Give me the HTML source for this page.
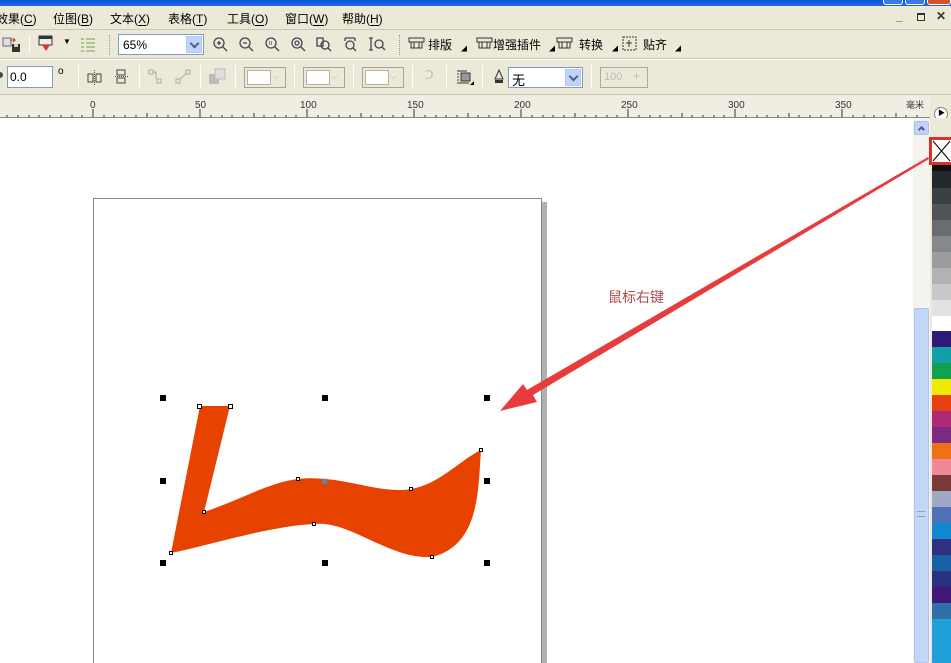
<!DOCTYPE html>
<html><head><meta charset="utf-8">
<style>
*{margin:0;padding:0;box-sizing:border-box}
body{width:951px;height:663px;overflow:hidden;background:#fff;font-family:"Liberation Sans","Noto Sans CJK SC",sans-serif;font-size:12px;color:#000;position:relative}
.a{position:absolute}
.bar{background:#ece9d8}
.t{position:absolute;white-space:nowrap}
.t u{text-decoration:none;border-bottom:1px solid #000;line-height:11px;display:inline-block}
.sep{position:absolute;width:1px;background:#c5c2b2;border-right:1px solid #fff}
.dd{position:absolute;background:#fff;border:1px solid #7f9db9;height:21px}
.ddb{position:absolute;right:1px;top:1px;width:16px;height:17px;background:#c1d3fb;border:1px solid #b4c8f6}
.ddb:after{content:"";position:absolute;left:4px;top:3px;width:5px;height:5px;border-right:2px solid #4d6185;border-bottom:2px solid #4d6185;transform:rotate(45deg)}
.gdd{position:absolute;height:21px;border:1px solid #a5a396;background:#ece9d8}
.gdd i{position:absolute;left:2px;top:2px;width:24px;height:15px;background:#fff;border:1px solid #b5b3a8}
</style></head><body>
<div class="a" style="left:0;top:0;width:951px;height:6px;background:linear-gradient(#0a55d8,#2466e0)"></div>
<div class="a" style="left:883px;top:0;width:20px;height:5px;background:#3b79e8;border:1px solid #fff;border-top:0;border-radius:0 0 3px 3px"></div>
<div class="a" style="left:905px;top:0;width:20px;height:5px;background:#3b79e8;border:1px solid #fff;border-top:0;border-radius:0 0 3px 3px"></div>
<div class="a" style="left:927px;top:0;width:24px;height:5px;background:#d8502c;border:1px solid #fff;border-top:0;border-radius:0 0 3px 3px"></div>
<div class="a bar" style="left:0;top:6px;width:951px;height:24px"></div>
<div class="t" style="left:-4px;top:10px">效果(<u>C</u>)</div>
<div class="t" style="left:53px;top:10px">位图(<u>B</u>)</div>
<div class="t" style="left:110px;top:10px">文本(<u>X</u>)</div>
<div class="t" style="left:168px;top:10px">表格(<u>T</u>)</div>
<div class="t" style="left:227px;top:10px">工具(<u>O</u>)</div>
<div class="t" style="left:285px;top:10px">窗口(<u>W</u>)</div>
<div class="t" style="left:342px;top:10px">帮助(<u>H</u>)</div>
<div class="t" style="left:896px;top:9px;font-weight:bold;color:#444">_</div>
<div class="a" style="left:917px;top:13px;width:8px;height:8px;border:1px solid #333;border-top-width:2px"></div>
<div class="t" style="left:936px;top:9px;font-weight:bold;color:#333">✕</div>
<div class="a" style="left:0;top:29px;width:951px;height:1px;background:#c8c5b4"></div>
<div class="a bar" style="left:0;top:30px;width:951px;height:29px"></div>
<svg class="a" style="left:2px;top:34px" width="20" height="20"><rect x="1" y="4" width="8" height="8" fill="#dde" stroke="#667"/><path d="M8 6h5l-2-2M13 6l-2 2" stroke="#c33" fill="none"/><rect x="10" y="10" width="8" height="8" fill="#333"/><rect x="12" y="10" width="4" height="3" fill="#ccc"/></svg>
<div class="sep" style="left:29px;top:34px;height:20px"></div>
<svg class="a" style="left:38px;top:35px" width="16" height="18"><rect x="1" y="1" width="13" height="9" fill="#eee" stroke="#333"/><rect x="1" y="1" width="13" height="3" fill="#333"/><path d="M4 10l4 6 4-6z" fill="#d33"/></svg>
<div class="t" style="left:63px;top:37px;font-size:8px">▼</div>
<svg class="a" style="left:80px;top:36px" width="16" height="16"><path d="M1 3h3M6 3h9M1 7h3M6 7h9M1 11h3M6 11h9M1 15h3M6 15h9" stroke="#7a9a4a"/></svg>
<div class="a" style="left:109px;top:35px;width:1px;height:20px;border-left:1px dotted #999"></div>
<div class="dd" style="left:118px;top:34px;width:86px"><span class="t" style="left:4px;top:3px">65%</span><div class="ddb"></div></div>
<svg class="a" style="left:213px;top:36px" width="180" height="18">
<g fill="none" stroke="#445" stroke-width="1.3">
<circle cx="6" cy="7" r="5"/><path d="M10 11l4 4M4 7h4M6 5v4"/>
<circle cx="32" cy="7" r="5"/><path d="M36 11l4 4M30 7h4"/>
<circle cx="58" cy="7" r="5"/><path d="M62 11l4 4"/><path d="M56 6h4M56 8h4" stroke-dasharray="1 1"/>
<circle cx="84" cy="7" r="5"/><path d="M88 11l4 4"/><circle cx="84" cy="7" r="2"/>
<rect x="104" y="2" width="6" height="8"/><circle cx="112" cy="9" r="4"/><path d="M115 12l3 3"/>
<path d="M132 2h10M132 2v3M142 2v3"/><circle cx="137" cy="9" r="4"/><path d="M140 12l3 3"/>
<path d="M158 2v12M156 2h4M156 14h4"/><circle cx="166" cy="8" r="4"/><path d="M169 11l3 3"/>
</g></svg>
<div class="a" style="left:399px;top:35px;width:1px;height:20px;border-left:1px dotted #999"></div>
<svg class="a" style="left:408px;top:35px" width="280" height="18"><g fill="none" stroke="#333"><rect x="1" y="3" width="15" height="4"/><path d="M3 7v6h11V7M6 7v6M11 7v6"/>
<rect x="69" y="3" width="15" height="4"/><path d="M71 7v6h11V7M74 7v6M79 7v6"/>
<rect x="149" y="3" width="15" height="4"/><path d="M151 7v6h11V7M154 7v6M159 7v6"/>
<rect x="215" y="2" width="13" height="13" stroke-dasharray="2 1"/><path d="M221 5v7M218 8h6"/></g></svg>
<div class="t" style="left:428px;top:36px">排版</div>
<div class="t" style="left:493px;top:36px">增强插件</div>
<div class="t" style="left:579px;top:36px">转换</div>
<div class="t" style="left:643px;top:36px">贴齐</div>
<div class="t" style="left:461px;top:44px;font-size:6px">◢</div>
<div class="t" style="left:549px;top:44px;font-size:6px">◢</div>
<div class="t" style="left:612px;top:44px;font-size:6px">◢</div>
<div class="t" style="left:675px;top:44px;font-size:6px">◢</div>
<div class="a" style="left:0;top:58px;width:951px;height:1px;background:#c8c5b4"></div>
<div class="a" style="left:0;top:59px;width:951px;height:1px;background:#fff"></div>
<div class="a bar" style="left:0;top:60px;width:951px;height:35px"></div>
<div class="a" style="left:-3px;top:72px;width:6px;height:6px;border-radius:50%;background:#444"></div>
<div class="a" style="left:7px;top:66px;width:46px;height:22px;background:#fff;border:1px solid #7f9db9"><span class="t" style="left:2px;top:3px">0.0</span></div>
<div class="t" style="left:58px;top:66px;font-size:10px">o</div>
<div class="sep" style="left:78px;top:65px;height:24px"></div>
<svg class="a" style="left:86px;top:68px" width="44" height="18"><g fill="none" stroke="#444"><rect x="2" y="6" width="5" height="8"/><rect x="10" y="6" width="5" height="8"/><path d="M8.5 2v15" stroke-dasharray="1 1"/><rect x="31" y="2" width="8" height="5"/><rect x="31" y="10" width="8" height="5"/><path d="M29 8.5h13" stroke-dasharray="1 1"/></g></svg>
<div class="sep" style="left:139px;top:65px;height:24px"></div>
<svg class="a" style="left:148px;top:69px" width="44" height="16"><g fill="none" stroke="#aaa"><rect x="1" y="1" width="4" height="4"/><rect x="9" y="10" width="4" height="4"/><path d="M5 3h3v7"/><rect x="28" y="10" width="4" height="4"/><rect x="38" y="1" width="4" height="4"/><path d="M32 10l6-5"/></g></svg>
<div class="sep" style="left:200px;top:65px;height:24px"></div>
<svg class="a" style="left:208px;top:68px" width="20" height="18"><rect x="1" y="6" width="10" height="10" fill="#bbb"/><rect x="7" y="1" width="10" height="10" fill="#ddd" stroke="#bbb"/></svg>
<div class="sep" style="left:235px;top:65px;height:24px"></div>
<div class="gdd" style="left:244px;top:67px;width:42px"><i></i></div>
<div class="t" style="left:272px;top:71px;color:#bbb;font-size:9px">⌵</div>
<div class="sep" style="left:294px;top:65px;height:24px"></div>
<div class="gdd" style="left:303px;top:67px;width:42px"><i></i></div>
<div class="t" style="left:331px;top:71px;color:#bbb;font-size:9px">⌵</div>
<div class="sep" style="left:353px;top:65px;height:24px"></div>
<div class="gdd" style="left:362px;top:67px;width:42px"><i></i></div>
<div class="t" style="left:390px;top:71px;color:#bbb;font-size:9px">⌵</div>
<div class="sep" style="left:412px;top:65px;height:24px"></div>
<div class="t" style="left:425px;top:68px;color:#bbb">Ↄ</div>
<div class="sep" style="left:446px;top:65px;height:24px"></div>
<svg class="a" style="left:456px;top:69px" width="20" height="18"><path d="M1 2h10M1 5h2M1 8h2M1 11h2M1 14h12" stroke="#333"/><rect x="5" y="4" width="9" height="8" fill="#999" stroke="#333"/><path d="M14 16l4-4v4z" fill="#000"/></svg>
<div class="sep" style="left:482px;top:65px;height:24px"></div>
<svg class="a" style="left:493px;top:69px" width="12" height="16"><path d="M6 1l4 9H2z" fill="none" stroke="#333"/><rect x="2" y="11" width="8" height="3" fill="#333"/></svg>
<div class="dd" style="left:508px;top:67px;width:75px"><span class="t" style="left:3px;top:2px;font-size:13px">无</span><div class="ddb"></div></div>
<div class="sep" style="left:591px;top:65px;height:24px"></div>
<div class="a" style="left:600px;top:67px;width:48px;height:21px;border:1px solid #aaa"><span class="t" style="left:3px;top:3px;color:#bbb;font-size:11px">100</span><span class="t" style="left:32px;top:1px;color:#bbb">+</span></div>
<div class="a" style="left:0;top:94px;width:951px;height:1px;background:#c8c5b4"></div>
<div class="a" style="left:0;top:95px;width:930px;height:23px;background:#f0eee2;border-bottom:1px solid #888"></div>
<svg class="a" style="left:0;top:95px" width="930" height="23" font-family="Liberation Sans" font-size="10" fill="#333">
<g stroke="#333" stroke-width="1">
<path d="M7 20v2M18 20v2M29 20v2M39 20v2M50 20v2M61 20v2M72 20v2M82 20v2M93 14v8M104 20v2M114 20v2M125 20v2M136 20v2M147 18v4M157 20v2M168 20v2M179 20v2M189 20v2M200 14v8M211 20v2M222 20v2M232 20v2M243 20v2M254 18v4M264 20v2M275 20v2M286 20v2M296 20v2M307 14v8M318 20v2M329 20v2M339 20v2M350 20v2M361 18v4M371 20v2M382 20v2M393 20v2M403 20v2M414 14v8M425 20v2M436 20v2M446 20v2M457 20v2M468 18v4M478 20v2M489 20v2M500 20v2M510 20v2M521 14v8M532 20v2M543 20v2M553 20v2M564 20v2M575 18v4M585 20v2M596 20v2M607 20v2M617 20v2M628 14v8M639 20v2M650 20v2M660 20v2M671 20v2M682 18v4M692 20v2M703 20v2M714 20v2M724 20v2M735 14v8M746 20v2M757 20v2M767 20v2M778 20v2M789 18v4M799 20v2M810 20v2M821 20v2M831 20v2M842 14v8M853 20v2M864 20v2M874 20v2M885 20v2M896 18v4M906 20v2M917 20v2"/>
</g>
<text x="90" y="13">0</text><text x="195" y="13">50</text><text x="300" y="13">100</text><text x="407" y="13">150</text><text x="514" y="13">200</text><text x="621" y="13">250</text><text x="728" y="13">300</text><text x="835" y="13">350</text><text x="906" y="13" font-size="9">毫米</text>
</svg>
<div class="a bar" style="left:930px;top:95px;width:21px;height:25px"></div>
<div class="a" style="left:934px;top:107px;width:14px;height:14px;border-radius:50%;background:#fff;border:1px solid #888"></div>
<div class="t" style="left:938px;top:108px;font-size:7px">▶</div>
<div class="a" style="left:913px;top:118px;width:17px;height:545px;background:#f4f3ee"></div>
<div class="a" style="left:914px;top:121px;width:15px;height:14px;background:#c1d3fb;border:1px solid #a9bff0;border-radius:2px"></div>
<div class="a" style="left:919px;top:127px;width:5px;height:5px;border-left:2px solid #4d6185;border-top:2px solid #4d6185;transform:rotate(45deg)"></div>
<div class="a" style="left:914px;top:308px;width:15px;height:355px;background:#c4d5fa;border:1px solid #aec4f4;border-radius:2px"></div>
<div class="a" style="left:917px;top:511px;width:8px;height:6px;border-top:1px solid #8aa0d8;border-bottom:1px solid #8aa0d8"></div>
<div class="a" style="left:930px;top:118px;width:21px;height:545px;background:#ece9d8"></div>
<div class="a" style="left:929px;top:137px;width:22px;height:28px;border:3px solid #d83030"></div>
<svg class="a" style="left:932px;top:140px" width="19" height="22"><rect x="0" y="0" width="19" height="22" fill="#fff"/><path d="M1 1l17 20M18 1L1 21" stroke="#000"/></svg>
<div class="a" style="left:932px;top:165px;width:19px;height:498px;background:linear-gradient(#111 0 6px,#23292b 6px 23px,#3a4044 23px 39px,#505458 39px 55px,#696d70 55px 71px,#85898b 71px 87px,#9a9c9e 87px 103px,#b0b2b4 103px 119px,#c8c8ca 119px 135px,#e2e2e4 135px 151px,#fff 151px 166px,#2e1a78 166px 182px,#11a0a8 182px 198px,#10a050 198px 214px,#f0e800 214px 230px,#e84010 230px 246px,#b02878 246px 262px,#7a2a80 262px 278px,#f07018 278px 294px,#f08898 294px 310px,#7a3a38 310px 326px,#a0a8c8 326px 342px,#5070b8 342px 358px,#1088d0 358px 374px,#303080 374px 390px,#1860a8 390px 406px,#283080 406px 422px,#401878 422px 438px,#3070a8 438px 454px,#20a0d8 454px 498px)"></div>
<svg class="a" style="left:0;top:118px" width="913" height="545">
<rect x="541" y="84" width="6" height="470" fill="#b0b0b0"/>
<rect x="93.5" y="80.5" width="448" height="470" fill="#fff" stroke="#888"/>
<g transform="translate(0,-118)">
<path d="M200,406 L230,406 L204,512 C240,500 270,482 298,479 C340,474 380,495 411,489 C440,484 460,460 481,450 C478,490 480,545 432,557 C390,560 350,520 314,524 C270,526 210,545 171,553 Z" fill="#e84200"/>
<g fill="#000"><rect x="160" y="395" width="6" height="6"/><rect x="322" y="395" width="6" height="6"/><rect x="484" y="395" width="6" height="6"/><rect x="160" y="478" width="6" height="6"/><rect x="484" y="478" width="6" height="6"/><rect x="160" y="560" width="6" height="6"/><rect x="322" y="560" width="6" height="6"/><rect x="484" y="560" width="6" height="6"/></g>
<g fill="#fff" stroke="#000" stroke-width="1"><rect x="197.5" y="404.5" width="4" height="4"/><rect x="228.5" y="404.5" width="4" height="4"/><rect x="202.5" y="510.5" width="3" height="3"/><rect x="296.5" y="477.5" width="3" height="3"/><rect x="409.5" y="487.5" width="3" height="3"/><rect x="479.5" y="448.5" width="3" height="3"/><rect x="430.5" y="555.5" width="3" height="3"/><rect x="312.5" y="522.5" width="3" height="3"/><rect x="169.5" y="551.5" width="3" height="3"/></g>
<path d="M322,479l5,5M327,479l-5,5" stroke="#5a8ab0" stroke-width="2"/>
<text x="608" y="302" font-family="Liberation Sans,Noto Sans CJK SC,sans-serif" font-size="14" fill="#b44848">鼠标右键</text>
</g>
</svg>
<svg class="a" style="left:0;top:0" width="951" height="663">
<polygon points="928,157 929,159 533,395 537,402 500,411 523,384 527,390" fill="#e83c3c"/>
</svg>
</body></html>
